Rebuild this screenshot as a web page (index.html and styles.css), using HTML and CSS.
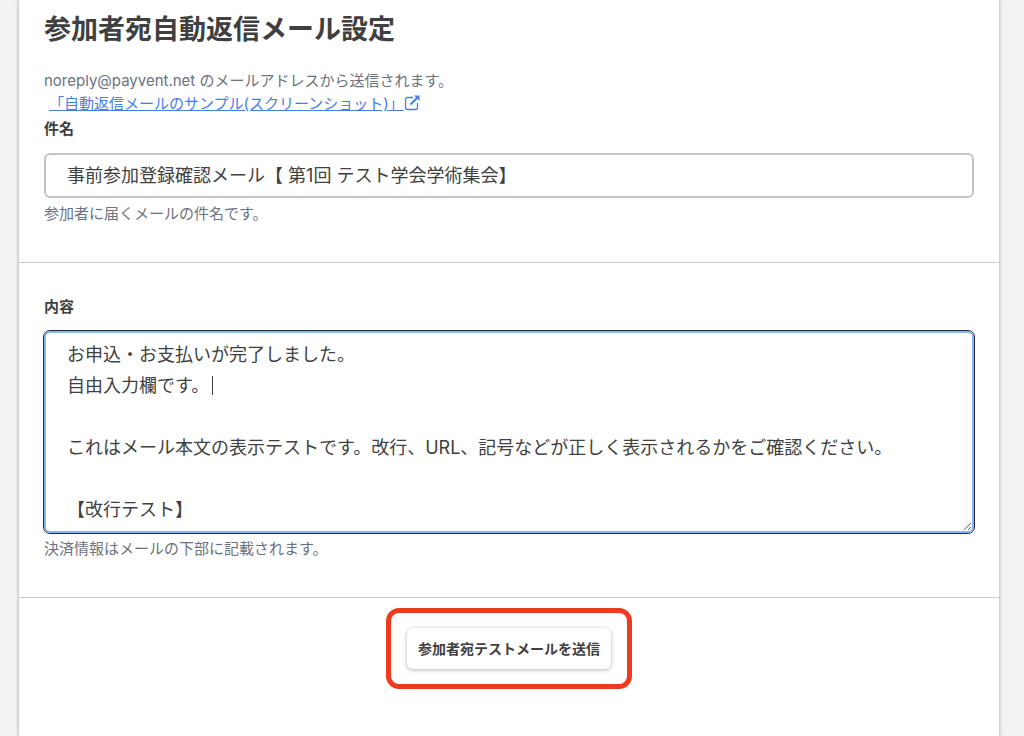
FILE: index.html
```html
<!DOCTYPE html>
<html lang="ja">

<head>
    <meta charset="UTF-8">
    <meta name="viewport" content="width=device-width, initial-scale=1.0">
    <title>参加者宛自動返信メール設定</title>
    <link rel="stylesheet" href="styles.css">
</head>

<body>
    <main class="panel">
        <form>
            <!-- subject of the mail -->
            <section class="section section-subject">
                <h1 class="title">参加者宛自動返信メール設定</h1>
                <p class="lead">noreply@payvent.net のメールアドレスから送信されます。</p>
                <p class="sample">
                    <a href="#sample">「自動返信メールのサンプル(スクリーンショット)」<svg class="icon" viewBox="0 0 16 16" aria-hidden="true">
                        <path d="M9 2.5H3.5a2 2 0 0 0-2 2v8a2 2 0 0 0 2 2h8a2 2 0 0 0 2-2V8" fill="none" stroke="currentColor" stroke-width="1.3" />
                        <path d="M6.5 9.5L13 3" fill="none" stroke="currentColor" stroke-width="2" />
                        <path d="M10 .5h5.5V6z" fill="currentColor" />
                    </svg></a>
                </p>
                <label class="label" for="subject">件名</label>
                <input class="field" type="text" id="subject" value="事前参加登録確認メール【 第1回 テスト学会学術集会】">
                <p class="help">参加者に届くメールの件名です。</p>
            </section>

            <!-- mail body -->
            <section class="section section-body">
                <label class="label" for="content">内容</label>
                <div class="editor">
                    <textarea class="field field-area" id="content">お申込・お支払いが完了しました。
自由入力欄です。

これはメール本文の表示テストです。改行、URL、記号などが正しく表示されるかをご確認ください。

【改行テスト】</textarea>
                    <span class="caret"></span>
                </div>
                <p class="help">決済情報はメールの下部に記載されます。</p>
            </section>

            <div class="actions">
                <div class="highlight">
                    <button class="btn" type="button">参加者宛テストメールを送信</button>
                </div>
            </div>
        </form>
    </main>

    <script>
        // put the cursor at the end of the second line
        const content = document.querySelector('#content');
        const pos = content.value.indexOf('欄です。') + 4;
        content.focus();
        content.setSelectionRange(pos, pos);
        content.scrollTop = 0;
    </script>
</body>

</html>
```
FILE: styles.css
```css
* {
    box-sizing: border-box;
}

body {
    margin: 0;
    padding: 0 25px 0 19px;
    min-height: 100vh;
    display: flex;
    background-color: #f3f3f3;
    color: #404040;
    font-family: Inter, "Noto Sans CJK JP", sans-serif;
    font-size: 15px;
    line-height: 23px;
}

p {
    margin: 0;
}

.panel {
    flex: 1;
    background-color: #fff;
    box-shadow: 0 0 4px rgba(0, 0, 0, 0.35);
}

.section {
    padding: 30px 25px 37px;
    border-bottom: 1px solid #ccc;
}

.section-subject {
    padding-top: 8px;
}

.title {
    margin: 0 0 18px;
    font-size: 27px;
    line-height: 43px;
    font-weight: 700;
}

.lead,
.help {
    color: #6b7280;
}

.sample {
    padding-left: 5px;
}

.sample a {
    color: #4a7de8;
}

.icon {
    width: 16px;
    height: 16px;
    vertical-align: -2px;
}

.label {
    display: block;
    margin: 2px 0 13px;
    font-weight: 700;
}

.field {
    display: block;
    width: 100%;
    margin-bottom: 4px;
    padding: 6px 21px;
    border: 2px solid #c4c4c4;
    border-radius: 6px;
    background-color: #fff;
    color: #404040;
    font-family: inherit;
    font-size: 18px;
    line-height: 29px;
}

.editor {
    position: relative;
}

.field-area {
    height: 202px;
    line-height: 31px;
    resize: vertical;
    overflow: hidden;
    caret-color: transparent;
}

.field-area:focus {
    border-color: #8ab4f8;
    outline: 1px solid #222b3d;
}

/* text cursor, after the second line */
.caret {
    position: absolute;
    top: 45px;
    left: 168px;
    width: 1px;
    height: 19px;
    background-color: #404040;
}

.actions {
    display: flex;
    justify-content: center;
    padding: 10px 0 48px;
}

/* red frame around the test button */
.highlight {
    padding: 15px 16px;
    border: 5px solid #ee3a1f;
    border-radius: 13px;
}

.btn {
    padding: 9px 11px;
    border: 0;
    border-radius: 6px;
    background-color: #fff;
    box-shadow: 0 1px 4px rgba(0, 0, 0, 0.3);
    color: #404040;
    font-family: inherit;
    font-size: 14px;
    line-height: 23px;
    font-weight: 700;
    cursor: pointer;
}
```
